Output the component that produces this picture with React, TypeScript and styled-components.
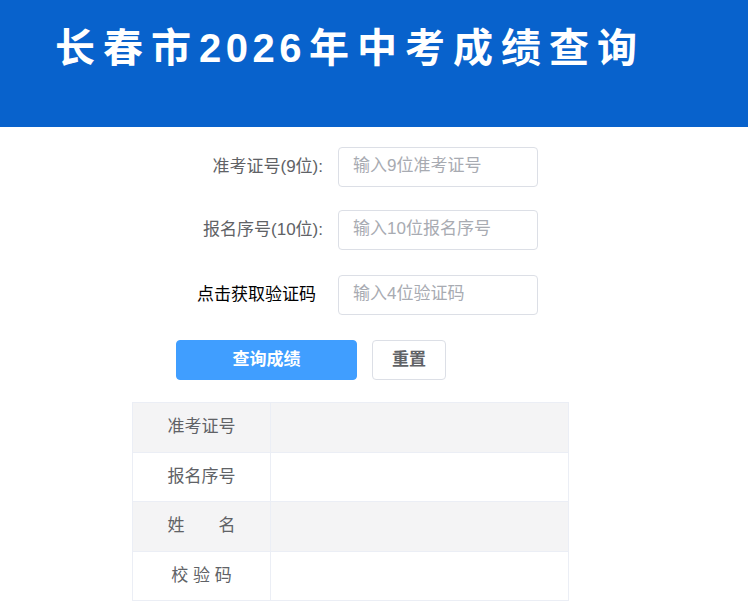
import React from "react"
import styled, { createGlobalStyle } from "styled-components"

const GlobalStyle = createGlobalStyle`
    html, body {
        margin: 0;
        padding: 0;
        background: #ffffff;
        font-family: "Liberation Sans", "Noto Sans CJK SC", sans-serif;
    }
`

const Header = styled.header`
    height: 127px;
    background: #0862cc;
    box-sizing: border-box;
    padding: 28px 0 0 55px;
`

const Title = styled.h1`
    margin: 0;
    color: #ffffff;
    font-size: 40px;
    line-height: 40px;
    font-weight: bold;
    letter-spacing: 8px;
    white-space: nowrap;

    .digits {
        letter-spacing: 4.5px;
        margin-right: 3px;
    }
`

const Content = styled.main`
    width: 437px;
    padding: 20px 0 0 132px;
`

const Form = styled.form`
    display: flex;
    flex-direction: column;
`

const Row = styled.div<{ $gap: number }>`
    display: grid;
    grid-template-columns: 191px 200px;
    column-gap: 15px;
    align-items: center;
    margin-bottom: ${(p) => p.$gap}px;
`

const Label = styled.label<{ $plain?: boolean }>`
    text-align: right;
    font-size: 17px;
    color: ${(p) => (p.$plain ? "#000000" : "#606266")};
    padding-right: ${(p) => (p.$plain ? "7px" : "0")};
    padding-bottom: 5px;
    white-space: nowrap;
    cursor: ${(p) => (p.$plain ? "pointer" : "default")};
`

const Input = styled.input`
    box-sizing: border-box;
    width: 200px;
    height: 40px;
    padding: 0 14px 2px;
    border: 1px solid #dcdfe6;
    border-radius: 4px;
    font-family: inherit;
    font-size: 17px;
    color: #606266;
    outline: none;

    &::placeholder {
        color: #a8abb2;
    }
`

const Buttons = styled.div`
    display: flex;
    gap: 15px;
    padding-left: 44px;
    margin-bottom: 22px;
`

const Button = styled.button<{ $primary?: boolean }>`
    box-sizing: border-box;
    height: 40px;
    width: ${(p) => (p.$primary ? "181px" : "74px")};
    padding: 0 0 5px;
    border-radius: 4px;
    border: 1px solid ${(p) => (p.$primary ? "#409eff" : "#dcdfe6")};
    background: ${(p) => (p.$primary ? "#409eff" : "#ffffff")};
    color: ${(p) => (p.$primary ? "#ffffff" : "#606266")};
    font-family: inherit;
    font-size: 17px;
    font-weight: bold;
    cursor: pointer;
`

const Table = styled.table`
    width: 437px;
    border-collapse: collapse;
    table-layout: fixed;
`

const Tr = styled.tr<{ $striped: boolean }>`
    height: 49.5px;
    background: ${(p) => (p.$striped ? "#f4f4f5" : "#ffffff")};
`

const Th = styled.td`
    width: 137px;
    border: 1px solid #ebeef5;
    text-align: center;
    font-size: 17px;
    color: #606266;
    padding: 0 0 5px;
`

const Td = styled.td`
    border: 1px solid #ebeef5;
    padding: 0;
`

const resultRows = ["准考证号", "报名序号", "姓\u2003\u2003名", "校 验 码"]

export default function App() {
    return (
        <>
            <GlobalStyle />
            <Header>
                <Title>
                    长春市<span className="digits">2026</span>年中考成绩查询
                </Title>
            </Header>
            <Content>
                <Form onSubmit={(e) => e.preventDefault()}>
                    <Row $gap={23}>
                        <Label>准考证号(9位):</Label>
                        <Input placeholder="输入9位准考证号" />
                    </Row>
                    <Row $gap={25}>
                        <Label>报名序号(10位):</Label>
                        <Input placeholder="输入10位报名序号" />
                    </Row>
                    <Row $gap={25}>
                        <Label $plain>点击获取验证码</Label>
                        <Input placeholder="输入4位验证码" />
                    </Row>
                    <Buttons>
                        <Button type="submit" $primary>
                            查询成绩
                        </Button>
                        <Button type="reset">重置</Button>
                    </Buttons>
                </Form>
                <Table>
                    <tbody>
                        {resultRows.map((label, i) => (
                            <Tr key={label} $striped={i % 2 === 0}>
                                <Th>{label}</Th>
                                <Td />
                            </Tr>
                        ))}
                    </tbody>
                </Table>
            </Content>
        </>
    )
}
